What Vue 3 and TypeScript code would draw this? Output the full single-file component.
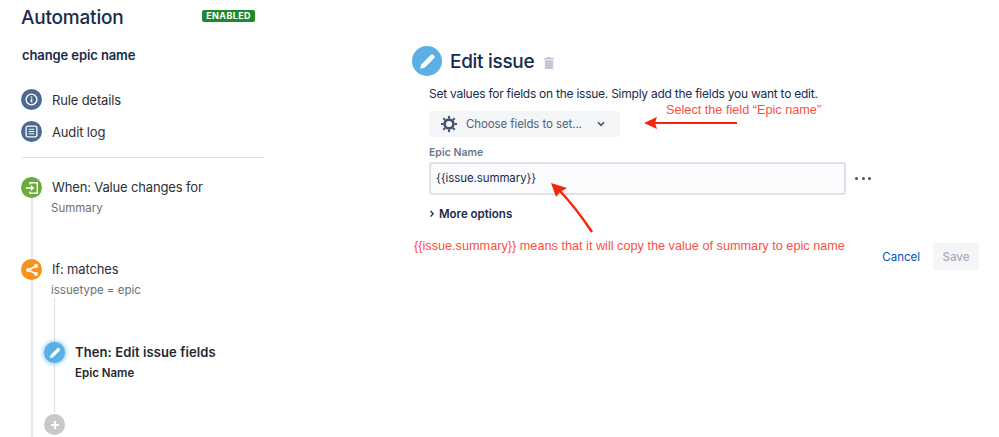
<template>
  <div class="page">
    <aside class="sidebar">
      <div class="rail outer"></div>
      <div class="rail inner"></div>

      <div class="head">
        <h1>Automation</h1>
        <span class="lozenge">ENABLED</span>
      </div>
      <h2>change epic name</h2>

      <div class="link first">
        <span class="dot navy">
          <svg width="13" height="13" viewBox="0 0 14 14" fill="none" stroke="#fff">
            <circle cx="7" cy="7" r="5.8" stroke-width="1.5" />
            <path d="M7 6.300v3.600M7 3.800v1.200" stroke-width="1.700" />
          </svg>
        </span>
        Rule details
      </div>
      <div class="link second">
        <span class="dot navy">
          <svg width="13" height="13" viewBox="0 0 14 14" fill="none" stroke="#fff">
            <rect x="1.200" y="1.200" width="11.600" height="11.600" rx="2" stroke-width="1.400" />
            <path d="M4 4.600h6M4 7h6M4 9.400h6" stroke-width="1" />
          </svg>
        </span>
        Audit log
      </div>
      <hr />

      <div class="step when">
        <span class="dot green">
          <svg width="14" height="14" viewBox="0 0 14 14" fill="none" stroke="#fff" stroke-width="1.400">
            <path d="M5 3.500V1.700h7.300v10.600H5v-1.800" />
            <path d="M.8 7h7.400M6 4.800 8.300 7 6 9.200" />
          </svg>
        </span>
        <div class="step-text">
          <div class="step-title">When: Value changes for</div>
          <div class="step-sub">Summary</div>
        </div>
      </div>

      <div class="step cond">
        <span class="dot orange">
          <svg width="14" height="14" viewBox="0 0 14 14" fill="#fff" stroke="#fff" stroke-width="1.500">
            <path d="M11 3 3.500 7l7.500 4" fill="none" />
            <circle cx="11" cy="3" r="1.200" />
            <circle cx="11" cy="11" r="1.200" />
            <circle cx="3" cy="7" r="1.200" />
          </svg>
        </span>
        <div class="step-text">
          <div class="step-title">If: matches</div>
          <div class="step-sub">issuetype = epic</div>
        </div>
      </div>

      <div class="step then">
        <span class="dot blue glow">
          <svg width="12" height="12" viewBox="0 0 14 14">
            <path d="M1 13l.8-3.600L9.600 1.600a1.600 1.600 0 0 1 2.300 0l.5.5a1.600 1.600 0 0 1 0 2.300L4.600 12.200z" fill="#fff" />
          </svg>
        </span>
        <div class="step-text">
          <div class="step-title strong">Then: Edit issue fields</div>
          <div class="step-sub strong">Epic Name</div>
        </div>
      </div>

      <span class="dot grey add">
        <svg width="10" height="10" viewBox="0 0 10 10" stroke="#fff" stroke-width="2">
          <path d="M5 1v8M1 5h8" />
        </svg>
      </span>
    </aside>

    <main class="main">
      <div class="title-row">
        <span class="big-icon">
          <svg width="17" height="17" viewBox="0 0 14 14">
            <path d="M1 13l.8-3.600L9.600 1.600a1.600 1.600 0 0 1 2.300 0l.5.5a1.600 1.600 0 0 1 0 2.300L4.600 12.200z" fill="#fff" />
          </svg>
        </span>
        <span class="title">Edit issue</span>
        <svg class="trash" width="10" height="12" viewBox="0 0 10 12" fill="#c1c7d0">
          <path d="M3.500 0h3l.5 1h3v1.400H0V1h3zM.8 3.200h8.400V11a1 1 0 0 1-1 1H1.800a1 1 0 0 1-1-1z" />
        </svg>
      </div>

      <div class="form">
        <p class="desc">Set values for fields on the issue. Simply add the fields you want to edit.</p>
        <button class="choose">
          <svg width="16" height="16" viewBox="0 0 16 16" fill="none" stroke="#42526e" stroke-width="2.600">
            <circle cx="8" cy="8" r="4.400" />
            <path stroke-width="2" d="M8 0v2.500M8 13.500V16M0 8h2.500M13.500 8H16M2.300 2.300l1.800 1.800M11.900 11.900l1.800 1.800M2.300 13.700l1.800-1.800M11.900 4.100l1.800-1.800" />
          </svg>
          <span>Choose fields to set...</span>
          <svg class="chev" width="8" height="6" viewBox="0 0 8 6" fill="none" stroke="#42526e" stroke-width="1.600">
            <path d="M1 1.300l3 3 3-3" />
          </svg>
        </button>

        <label class="field-label">Epic Name</label>
        <div class="field-row">
          <div class="input" v-pre>{{issue.summary}}</div>
          <div class="dots"><i></i><i></i><i></i></div>
        </div>

        <div class="more">
          <svg width="6" height="8" viewBox="0 0 6 8" fill="none" stroke="#172b4d" stroke-width="1.300">
            <path d="M1.500 1l2.700 2.800L1.500 6.600" />
          </svg>
          More options
        </div>
      </div>

      <div class="actions">
        <a class="cancel">Cancel</a>
        <button class="save" disabled>Save</button>
      </div>
    </main>

    <!-- red notes drawn over the screenshot -->
    <div class="note note-select">Select the field “Epic name”</div>
    <div class="note note-copy" v-pre>{{issue.summary}} means that it will copy the value of summary to epic name</div>
    <svg class="arrows" width="999" height="437" viewBox="0 0 999 437">
      <path d="M737 123H652" stroke="#f5260c" stroke-width="2" fill="none" />
      <path d="M644 123l13-6-2 6 2 6z" fill="#f5260c" />
      <path d="M592 232Q576 208 560 191" stroke="#f5260c" stroke-width="2.500" fill="none" />
      <path d="M551 183l16 5-7 4-4 5z" fill="#f5260c" />
    </svg>
  </div>
</template>

<script setup lang="ts">
</script>

<style>
html,
body {
  margin: 0;
  background: #fff;
}
</style>

<style scoped>
.page {
  position: relative;
  display: flex;
  width: 999px;
  height: 437px;
  overflow: hidden;
  background: #fff;
  color: #172b4d;
  font-family: Inter, "Liberation Sans", sans-serif;
}

.sidebar {
  position: relative;
  box-sizing: border-box;
  width: 264px;
  height: 437px;
  margin-left: 21px;
  flex: none;
}

.rail {
  position: absolute;
  background: #e6e7ea;
}
.rail.outer {
  left: 10px;
  top: 197px;
  bottom: 0;
  width: 2px;
}
.rail.inner {
  left: 33px;
  top: 298px;
  height: 114px;
  width: 1px;
  background: #dcdde0;
}

.head {
  display: flex;
  align-items: center;
  justify-content: space-between;
  width: 234px;
  height: 34px;
}
h1 {
  margin: 0;
  font-size: 19px;
  font-weight: 500;
  letter-spacing: -0.2px;
}
.lozenge {
  margin-top: -3px;
  padding: 0 4px;
  height: 12px;
  line-height: 12px;
  border-radius: 2px;
  background: #1f8a2c;
  color: #fff;
  font-size: 9px;
  font-weight: 700;
  letter-spacing: 0.4px;
}
h2 {
  margin: 12px 0 0 1px;
  font-size: 13px;
  line-height: 18px;
  font-weight: 600;
  letter-spacing: -0.1px;
}

.dot {
  position: relative;
  display: flex;
  align-items: center;
  justify-content: center;
  width: 21px;
  height: 21px;
  border-radius: 50%;
  flex: none;
}
.navy { background: #4a6a8f; }
.green { background: #6aab3c; }
.orange { background: #f6921e; }
.blue { background: #5aafe3; }
.grey { background: #c8c8c8; }
.glow { box-shadow: 0 0 4px 1px #8ecbf0; }

.link {
  display: flex;
  align-items: center;
  gap: 10px;
  color: #2b2f36;
  font-size: 13px;
  letter-spacing: -0.15px;
}
.link.first { margin-top: 25px; }
.link.second { margin-top: 11px; }

hr {
  width: 242px;
  height: 1px;
  margin: 15px 0 0 1px;
  border: 0;
  background: #dfe0e2;
}

.step {
  position: relative;
  display: flex;
  gap: 10px;
  align-items: flex-start;
}
.step.when { margin-top: 19px; }
.step.cond { margin-top: 43px; }
.step.then { margin-top: 44px; margin-left: 23px; }
.step-title {
  height: 21px;
  line-height: 21px;
  font-size: 13px;
  letter-spacing: -0.15px;
  color: #2b2f36;
}
.step-sub {
  margin-top: 2px;
  margin-left: -1px;
  line-height: 16px;
  font-size: 11.5px;
  color: #6b6f76;
}
.step-title.strong {
  font-weight: 600;
  letter-spacing: 0.1px;
  color: #26282c;
}
.step-sub.strong {
  margin-left: 0;
  font-weight: 600;
  color: #26282c;
}

.add {
  margin: 33px 0 0 23px;
}

.main {
  box-sizing: border-box;
  width: 567px;
  margin-left: 127px;
  flex: none;
}
.title-row {
  display: flex;
  align-items: center;
  height: 30px;
  margin-top: 46px;
}
.big-icon {
  display: flex;
  align-items: center;
  justify-content: center;
  width: 30px;
  height: 30px;
  border-radius: 50%;
  background: #5aafe3;
}
.title {
  margin-left: 8px;
  font-size: 19px;
  font-weight: 500;
  letter-spacing: -0.3px;
}
.trash {
  margin: 3px 0 0 10px;
}

.form {
  margin-left: 17px;
  width: 460px;
}
.desc {
  margin: 9px 0 0;
  line-height: 18px;
  font-size: 12px;
  letter-spacing: -0.25px;
  white-space: nowrap;
}
.choose {
  display: flex;
  align-items: center;
  box-sizing: border-box;
  width: 191px;
  height: 26px;
  margin-top: 8px;
  padding: 0 0 0 12px;
  border: 0;
  border-radius: 3px;
  background: #f4f5f7;
  color: #505f79;
  font: 11.5px Inter, "Liberation Sans", sans-serif;
  letter-spacing: -0.1px;
  white-space: nowrap;
}
.choose span {
  margin-left: 9px;
}
.chev {
  margin-left: 15px;
}
.field-label {
  display: block;
  margin-top: 9px;
  line-height: 14px;
  font-size: 10.5px;
  font-weight: 600;
  color: #6b778c;
}
.field-row {
  display: flex;
  align-items: center;
  margin-top: 2px;
}
.input {
  box-sizing: border-box;
  width: 417px;
  height: 33px;
  padding-left: 5px;
  border: 2px solid #dfe1e6;
  border-radius: 3px;
  background: #fafbfc;
  line-height: 29px;
  font-size: 11.5px;
  letter-spacing: -0.1px;
}
.dots {
  display: flex;
  gap: 3.500px;
  margin-left: 9px;
}
.dots i {
  width: 3px;
  height: 3px;
  border-radius: 50%;
  background: #42526e;
}
.more {
  display: flex;
  align-items: center;
  gap: 4px;
  margin: 11px 0 0 0;
  line-height: 16px;
  font-size: 11.5px;
  font-weight: 600;
}

.actions {
  display: flex;
  align-items: center;
  justify-content: flex-end;
  gap: 13px;
  margin-top: 21px;
}
.cancel {
  color: #0052cc;
  font-size: 11.5px;
}
.save {
  width: 46px;
  height: 27px;
  border: 0;
  border-radius: 3px;
  background: #f4f5f7;
  color: #a5adba;
  font: 500 11.5px Inter, "Liberation Sans", sans-serif;
}

.note {
  position: absolute;
  color: #fa4f45;
  font-family: "Liberation Sans", Arial, sans-serif;
  font-size: 12.7px;
  line-height: 16px;
  white-space: nowrap;
}
.note-select {
  left: 666px;
  top: 102px;
}
.note-copy {
  left: 414px;
  top: 238px;
}
.arrows {
  position: absolute;
  left: 0;
  top: 0;
  pointer-events: none;
}
</style>
